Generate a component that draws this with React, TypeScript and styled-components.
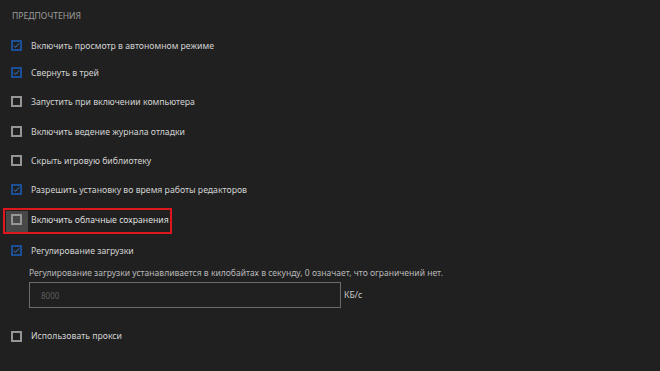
import React from "react";
import styled, { createGlobalStyle } from "styled-components";

const Global = createGlobalStyle`
  html, body { margin: 0; padding: 0; background: #202020; }
  body { font-family: "Noto Sans", "Open Sans", sans-serif; }
`;

const Page = styled.div`
  width: 660px;
  height: 371px;
  background: #202020;
  overflow: hidden;
  box-sizing: border-box;
  padding: 10px 0 0 11px;
  display: flex;
  flex-direction: column;
`;

const Title = styled.div`
  font-size: 8.6px;
  color: #9c9c9c;
  line-height: 12px;
  padding-left: 1px;
  margin-bottom: 10px;
`;

const List = styled.div`
  display: flex;
  flex-direction: column;
`;

const Row = styled.div<{ $h: number }>`
  position: relative;
  height: ${(p) => p.$h}px;
  display: flex;
  align-items: center;
  gap: 9px;
`;

const Highlight = styled.div`
  position: absolute;
  left: -8px;
  top: 4px;
  width: 169px;
  height: 26px;
  border: 2.5px solid #e0161f;
  box-sizing: border-box;
  pointer-events: none;
`;

const HoverBg = styled.div`
  position: absolute;
  left: -5.5px;
  top: 6.5px;
  width: 22px;
  height: 21px;
  background: #484848;
`;

const Box = styled.div<{ $checked: boolean }>`
  position: relative;
  width: 11px;
  height: 11px;
  box-sizing: border-box;
  border: 2px solid ${(p) => (p.$checked ? "#1b5099" : "#969696")};
  flex: none;
  display: flex;
  align-items: center;
  justify-content: center;
`;

const Label = styled.span<{ $hover?: boolean }>`
  position: relative;
  font-size: 8.7px;
  color: ${(p) => (p.$hover ? "#dedede" : "#d2d2d2")};
  line-height: 12px;
  white-space: nowrap;
`;

const Sub = styled.div`
  padding-left: 18px;
  display: flex;
  flex-direction: column;
  margin-top: 1px;
`;

const Desc = styled.div`
  font-size: 8.55px;
  color: #b8b8b8;
  line-height: 12px;
  white-space: nowrap;
`;

const InputLine = styled.div`
  display: flex;
  align-items: center;
  gap: 3px;
  margin-top: 3px;
`;

const Input = styled.div`
  width: 312px;
  height: 26px;
  box-sizing: border-box;
  border: 1.5px solid #6c6c6c;
  display: flex;
  align-items: center;
  padding-left: 11px;
  font-size: 8px;
  color: #5e5e5e;
`;

const Unit = styled.span`
  font-size: 8.7px;
  color: #c8c8c8;
`;

const Divider = styled.div`
  margin-top: 10px;
  margin-left: 1px;
  height: 1px;
  background: #2f2f2f;
`;

const Check = () => (
  <svg width="7" height="7" viewBox="0 0 7 7">
    <path d="M0.8 3.6 L2.6 5.3 L6.2 1.3" fill="none" stroke="#3b7dd8" strokeWidth="1" />
  </svg>
);

const CB = ({ checked }: { checked: boolean }) => (
  <Box $checked={checked}>{checked && <Check />}</Box>
);

const items: { label: string; checked: boolean; h: number }[] = [
  { label: "Включить просмотр в автономном режиме", checked: true, h: 27 },
  { label: "Свернуть в трей", checked: true, h: 27 },
  { label: "Запустить при включении компьютера", checked: false, h: 31 },
  { label: "Включить ведение журнала отладки", checked: false, h: 29 },
  { label: "Скрыть игровую библиотеку", checked: false, h: 29 },
  { label: "Разрешить установку во время работы редакторов", checked: true, h: 29 },
];

export default function App() {
  return (
    <>
      <Global />
      <Page>
        <Title>ПРЕДПОЧТЕНИЯ</Title>
        <List>
          {items.map((it) => (
            <Row key={it.label} $h={it.h}>
              <CB checked={it.checked} />
              <Label>{it.label}</Label>
            </Row>
          ))}
          <Row $h={31}>
            <HoverBg />
            <Highlight />
            <CB checked={false} />
            <Label $hover>Включить облачные сохранения</Label>
          </Row>
          <Row $h={31}>
            <CB checked={true} />
            <Label>Регулирование загрузки</Label>
          </Row>
          <Sub>
            <Desc>
              Регулирование загрузки устанавливается в килобайтах в секунду, 0 означает, что ограничений нет.
            </Desc>
            <InputLine>
              <Input>8000</Input>
              <Unit>КБ/с</Unit>
            </InputLine>
          </Sub>
          <Row $h={56}>
            <CB checked={false} />
            <Label>Использовать прокси</Label>
          </Row>
        </List>
        <Divider />
      </Page>
    </>
  );
}
